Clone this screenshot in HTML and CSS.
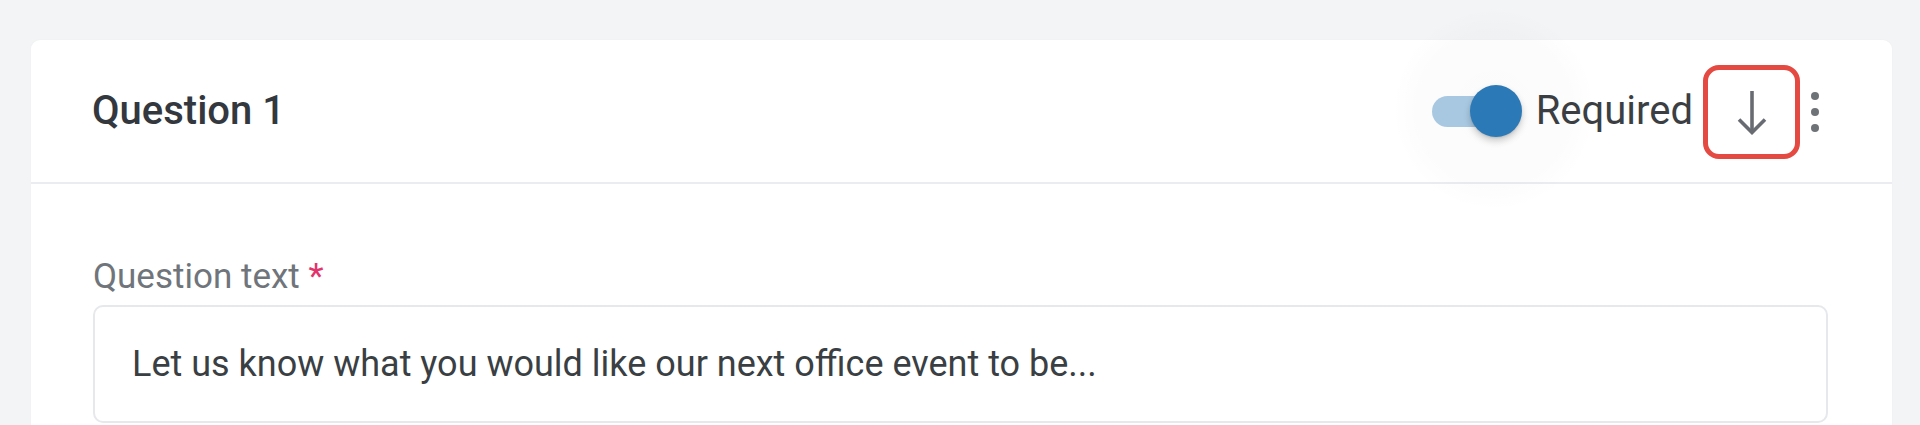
FILE: index.html
```html
<!DOCTYPE html>
<html lang="en">
<head>
<meta charset="utf-8">
<title>Question editor</title>
<link rel="stylesheet" href="styles.css">
</head>
<body>
<main class="page">
  <section class="card">
    <header class="card-header">
      <h2 class="card-title">Question 1</h2>
      <div class="header-actions">
        <span class="switch" role="switch" aria-checked="true">
          <span class="switch-halo"></span>
          <span class="switch-track"></span>
          <span class="switch-thumb"></span>
        </span>
        <span class="switch-label">Required</span>
        <button class="icon-btn highlighted" aria-label="Move down">
          <svg width="30" height="44" viewBox="0 0 30 44" aria-hidden="true">
            <path d="M15 0 V41" fill="none" stroke="#686c72" stroke-width="3.6"/>
            <path d="M2 28.5 L15 41.5 L28 28.5" fill="none" stroke="#686c72" stroke-width="3.6" stroke-linejoin="miter"/>
          </svg>
        </button>
        <button class="more-btn" aria-label="More">
          <span class="dot"></span><span class="dot"></span><span class="dot"></span>
        </button>
      </div>
    </header>
    <div class="card-body">
      <div class="field-label">Question text <span class="req">*</span></div>
      <div class="text-input">Let us know what you would like our next office event to be...</div>
    </div>
  </section>
</main>
</body>
</html>
```
FILE: styles.css
```css
html, body {
  margin: 0;
  padding: 0;
  overflow: hidden;
  height: 425px;
}

body {
  background: #f3f4f6;
  font-family: Roboto, "Liberation Sans", Arial, sans-serif;
}

.page {
  padding: 40px 28px 0 31px;
}

.card {
  background: #ffffff;
  border-radius: 9px;
  box-shadow: 0 0 2px rgba(0, 0, 0, 0.04);
}

.card-header {
  height: 142px;
  display: flex;
  align-items: center;
  justify-content: space-between;
  padding: 0 73px 0 61px;
  border-bottom: 2px solid #eaecef;
}

.card-title {
  margin: 0;
  font-size: 40px;
  line-height: 1;
  font-weight: 500;
  color: #33383e;
}

.header-actions {
  display: flex;
  align-items: center;
}

.switch {
  position: relative;
  width: 90px;
  height: 52px;
  display: flex;
  align-items: center;
  margin-right: 14px;
}

.switch-halo {
  position: absolute;
  left: -38px;
  top: -76px;
  width: 200px;
  height: 200px;
  border-radius: 50%;
  background: radial-gradient(circle, rgba(0, 0, 0, 0.014) 0%, rgba(0, 0, 0, 0.012) 55%, rgba(0, 0, 0, 0) 72%);
}

.switch-track {
  position: relative;
  width: 84px;
  height: 31px;
  border-radius: 16px;
  background: #a8c8e1;
}

.switch-thumb {
  position: absolute;
  right: 0;
  top: 0;
  width: 52px;
  height: 52px;
  border-radius: 50%;
  background: #2b79b6;
  box-shadow: 0 4px 7px rgba(0, 0, 0, 0.2), 0 1px 2px rgba(0, 0, 0, 0.1);
}

.switch-label {
  font-size: 40px;
  line-height: 1;
  color: #3b3f44;
  margin-right: 10px;
}

.icon-btn {
  width: 97px;
  height: 94px;
  box-sizing: border-box;
  background: #ffffff;
  border: 5px solid #e44a41;
  border-radius: 16px;
  display: flex;
  align-items: center;
  justify-content: center;
  padding: 0;
  margin-right: 11px;
  margin-top: 2px;
}

.icon-btn svg {
  display: block;
  margin-top: 2px;
}

.more-btn {
  width: 8px;
  padding: 0;
  border: 0;
  background: none;
  display: flex;
  flex-direction: column;
  gap: 8px;
  margin-top: 2px;
}

.dot {
  width: 8px;
  height: 8px;
  border-radius: 50%;
  background: #6e7378;
}

.card-body {
  padding: 72px 64px 40px 62px;
}

.field-label {
  font-size: 35px;
  line-height: 1.2;
  color: #6f757b;
  margin-bottom: 7px;
}

.req {
  color: #e2336c;
}

.text-input {
  height: 118px;
  box-sizing: border-box;
  border: 2px solid #e6e8eb;
  border-radius: 10px;
  padding: 0 37px;
  display: flex;
  align-items: center;
  font-size: 36px;
  color: #3a3f44;
}
```
